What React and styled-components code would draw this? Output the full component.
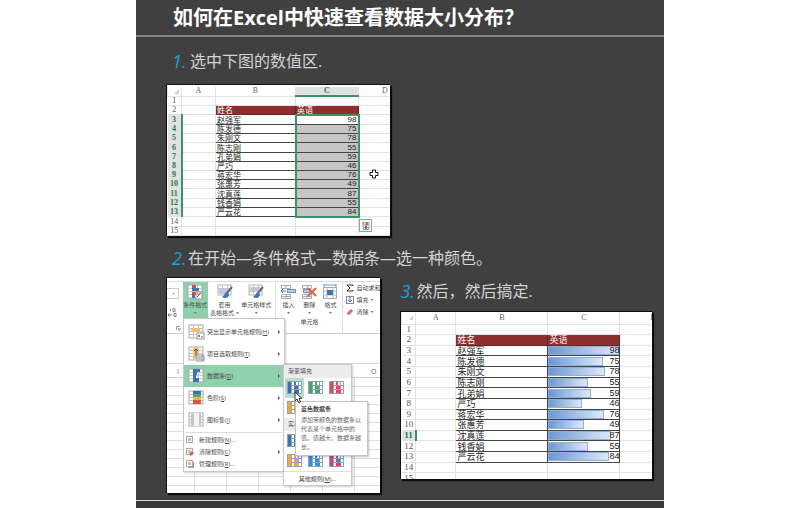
import React from 'react';
import styled, { createGlobalStyle, css } from 'styled-components';

const GlobalStyle = createGlobalStyle`
  * {
    box-sizing: border-box;
  }

  body {
    margin: 0;
    background: #fff;
    font-family: 'Open Sans', 'Noto Sans CJK SC', sans-serif;
  }

  button {
    margin: 0;
    padding: 0;
    border: none;
    background: none;
    color: inherit;
    font: inherit;
    cursor: pointer;
  }
`;

const Slide = styled.main`
  width: 66%;
  min-height: 100vh;
  margin: 0 auto;
  background: #404040;
  display: flex;
  flex-direction: column;
`;

const Header = styled.header`
  height: 37px;
  padding-left: 37px;
  border-bottom: 2px solid #868686;

  h1 {
    margin: 0;
    color: #fff;
    font-size: 20px;
    line-height: 36px;
    font-weight: 700;
    white-space: nowrap;
  }
`;

const Body = styled.div`
  flex: 1;
  padding: 14px 12px 7px 30px;
`;

const Footer = styled.footer`
  height: 8px;
  border-top: 1px solid #d8d8d8;
  background: #3a3a3a;
`;

const Step = styled.h2`
  display: flex;
  margin: 0 0 ${({ $space }) => $space}px;
  padding-left: ${({ $indent }) => $indent || 0}px;
  color: #d4d4d4;
  font-size: 16px;
  line-height: 20px;
  font-weight: 400;
  white-space: nowrap;
`;

const StepNumber = styled.span`
  width: ${({ $wide }) => ($wide ? 18 : 16)}px;
  color: #1ca3d8;
  font-size: 18px;
  font-style: italic;
  font-weight: 400;
`;

const Columns = styled.div`
  display: grid;
  grid-template-columns: minmax(0, 214fr) minmax(0, 251fr);
  gap: 20px;
  align-items: start;
`;

const ResultColumn = styled.div`
  padding-top: 4px;
`;

const Panel = styled.div`
  position: relative;
  width: ${({ $width }) => $width || '100%'};
  height: ${({ $height }) => $height}px;
  padding-top: ${({ $top }) => $top || 0}px;
  margin-bottom: ${({ $space }) => $space || 0}px;
  border: 1px solid #111;
  border-right: none;
  border-bottom: none;
  background: #fff;
  box-shadow: 2px 2px 1px #0c0c0c;
  overflow: hidden;
`;

/* ---------- worksheets ---------- */

const SheetTable = styled.table`
  width: ${({ $width }) => $width};
  height: ${({ $height }) => $height}px;
  table-layout: fixed;
  border-collapse: collapse;
  font-family: 'Noto Sans CJK SC', sans-serif;
  font-size: ${({ $size }) => $size}px;
  line-height: ${({ $size }) => $size}px;
  color: #222;

  th,
  td {
    padding: 0;
    border: 1px solid #e2e2e2;
    white-space: nowrap;
  }

  thead tr {
    height: ${({ $head }) => $head}px;
  }
`;

const ColumnHead = styled.th`
  color: ${({ $active }) => ($active ? '#1f7a4a' : '#666')};
  background: ${({ $active }) => ($active ? '#e1e1e1' : 'transparent')};
  font-family: 'Liberation Serif', serif;
  font-weight: ${({ $active }) => ($active ? 700 : 400)};
  font-size: 8px;
  line-height: 8px;
  && {
    border-top: none;
    ${({ $active }) => $active && css`border-bottom: 2px solid #3c9466;`}
  }
`;

const Corner = styled.i`
  display: block;
  width: 5px;
  height: 5px;
  margin: 0 2px 0 auto;
  background: #d2d2d2;
  clip-path: polygon(100% 0, 100% 100%, 0 100%);
`;

const RowHead = styled.th`
  font-family: 'Liberation Serif', serif;
  font-weight: ${({ $active }) => ($active ? 700 : 400)};
  color: ${({ $active }) => ($active ? '#1f7a4a' : '#555')};
  background: ${({ $active }) => ($active ? '#e1e1e1' : 'transparent')};
  && {
    border-left: none;
    ${({ $active }) => $active && css`border-right: 2px solid #3c9466;`}
  }
`;

const TitleCell = styled.td`
  background: #8f2e2f;
  color: #fff;
  && {
    border: 1px solid #6b2324;
    padding-left: 1px;
  }
`;

const NameCell = styled.td`
  && {
    border: 1px solid #444;
    padding-left: 1px;
  }
`;

const ScoreCell = styled.td`
  font-family: 'Liberation Sans', sans-serif;
  text-align: right;
  background: ${({ $shaded }) => ($shaded ? '#c6c6c6' : '#fff')};
  && {
    border: 1px solid #444;
    padding-right: ${({ $bar }) => ($bar ? 0 : 1)}px;
    ${({ $selected }) => $selected && css`
      border-left: 2px solid #3c9466;
      border-right: 2px solid #3c9466;
    `}
    ${({ $edge }) => $edge === 'top' && css`border-top: 2px solid #3c9466;`}
    ${({ $edge }) => $edge === 'bottom' && css`border-bottom: 2px solid #3c9466;`}
  }
`;

const BarBox = styled.div`
  display: grid;

  > * {
    grid-area: 1 / 1;
  }
`;

const Bar = styled.i`
  height: 9px;
  border: 1px solid #8fb0dc;
  background: linear-gradient(90deg, #6c98d2, #dce8f8);
`;

const QuickButton = styled.button`
  position: absolute;
  left: 192px;
  top: 134px;
  width: 13px;
  height: 13px;
  border: 1px solid #7fae93;
  background: #fff;

  svg {
    display: block;
  }
`;

const CrossCursor = styled.svg`
  position: absolute;
  left: 202px;
  top: 84px;
`;

const scores = [
  ['赵强军', 98],
  ['陈发德', 75],
  ['朱刚文', 78],
  ['陈志刚', 55],
  ['孔弟娟', 59],
  ['严巧', 46],
  ['蒋宏华', 76],
  ['张惠芳', 49],
  ['沈真莲', 87],
  ['钱香娟', 55],
  ['严云花', 84],
];

const maxScore = Math.max(...scores.map(([, score]) => score));

function Sheet({ widths, width, height, head, size, selected, bars, activeRows }) {
  const rows = Array.from({ length: 15 }, (_, i) => i + 1);

  return (
    <SheetTable $width={width} $height={height} $head={head} $size={size}>
      <colgroup>
        {widths.map((w, i) => <col key={i} style={{ width: w }} />)}
        <col />
      </colgroup>
      <thead>
        <tr>
          <ColumnHead><Corner /></ColumnHead>
          <ColumnHead>A</ColumnHead>
          <ColumnHead>B</ColumnHead>
          <ColumnHead $active={selected}>C</ColumnHead>
          <ColumnHead>D</ColumnHead>
        </tr>
      </thead>
      <tbody>
        {rows.map((n) => {
          const entry = scores[n - 3];
          return (
            <tr key={n}>
              <RowHead scope="row" $active={activeRows.includes(n)}>{n}</RowHead>
              <td />
              {n === 2 && (
                <>
                  <TitleCell>姓名</TitleCell>
                  <TitleCell>英语</TitleCell>
                </>
              )}
              {entry && (
                <>
                  <NameCell>{entry[0]}</NameCell>
                  <ScoreCell
                    $bar={bars}
                    $selected={selected}
                    $shaded={selected && n > 3}
                    $edge={selected && (n === 3 ? 'top' : n === 13 ? 'bottom' : '')}
                  >
                    {bars ? (
                      <BarBox>
                        <Bar style={{ width: `${(entry[1] / maxScore) * 100}%` }} />
                        <span>{entry[1]}</span>
                      </BarBox>
                    ) : entry[1]}
                  </ScoreCell>
                </>
              )}
              {n !== 2 && !entry && (
                <>
                  <td />
                  <td />
                </>
              )}
              <td />
            </tr>
          );
        })}
      </tbody>
    </SheetTable>
  );
}

/* ---------- icons ---------- */

function GridBase() {
  return (
    <>
      <rect x="1" y="1" width="14" height="13" fill="#fff" stroke="#a9a9a9" />
      <path d="M1 4.5h14M1 7.5h14M1 10.5h14M5.5 1v13M10.5 1v13" stroke="#c4c4c4" fill="none" />
    </>
  );
}

function ConditionalIcon() {
  return (
    <svg width="16" height="16" viewBox="0 0 16 16">
      <GridBase />
      <path d="M5 1h4v3H5zM5 8h5v3H5z" fill="#d9483b" />
      <path d="M5 4h7v3H5zM5 11h3v3H5z" fill="#3f74b8" />
      <rect x="9" y="8" width="6" height="7" fill="#fff" stroke="#999" />
      <path d="M10 13l4-4M10 10h3" stroke="#c0392b" />
    </svg>
  );
}

function BrushIcon({ table }) {
  return (
    <svg width="16" height="16" viewBox="0 0 16 16">
      <rect x="1" y="1" width="13" height="10" fill="#fff" stroke="#b4b4b4" />
      <rect x="2" y={table ? 4 : 3} width="10" height={table ? 6 : 5} fill="#b7cdea" />
      <path d="M1 4.5h13M1 7.5h13M5.5 1v10M10.5 1v10" stroke="#c4c4c4" />
      <path d="M15 3l-5 6" stroke="#666" strokeWidth="2" />
      <path d="M10 8c-2 0-2 3-5 5 3 2 7 1 7-3z" fill="#3f74b8" />
    </svg>
  );
}

function CellsIcon({ kind }) {
  return (
    <svg width="16" height="16" viewBox="0 0 16 16">
      {kind !== 'format' && (
        <path d="M1.5 1.5h9v3h-9zM1.5 10.5h9v4h-9zM6 1.5v3M6 10.5v4M1.5 12.5h9" fill="#fff" stroke="#aaa" />
      )}
      {kind === 'insert' && (
        <>
          <rect x="7.5" y="5.5" width="8" height="3" fill="#b7cdea" stroke="#6f94c4" />
          <path d="M6 7H1M3 5L1 7l2 2" stroke="#3f74b8" fill="none" />
        </>
      )}
      {kind === 'delete' && (
        <>
          <rect x="2.5" y="5.5" width="6" height="3" fill="#b7cdea" stroke="#6f94c4" />
          <path d="M7 4l8 8M15 4l-8 8" stroke="#e0603c" strokeWidth="2" />
        </>
      )}
      {kind === 'format' && (
        <>
          <rect x="1.5" y="3.5" width="13" height="11" fill="#fff" stroke="#aaa" />
          <path d="M1 7h14M1 11h14M5 3v12M11 3v12" stroke="#bbb" />
          <rect x="5" y="6" width="6" height="5" fill="#3f74b8" />
          <path d="M2 1h12M2 0v3M14 0v3" stroke="#6f94c4" />
        </>
      )}
    </svg>
  );
}

function MenuIcon({ kind }) {
  return (
    <svg width="17" height="17" viewBox="0 0 17 17">
      <GridBase />
      {kind === 'highlight' && (
        <>
          <rect x="3" y="4" width="9" height="4" fill="#f3bd69" />
          <rect x="9" y="9" width="7" height="6" fill="#fff" stroke="#999" />
          <path d="M10 12l2-1M10 12l2 1M13 13h2" stroke="#666" />
        </>
      )}
      {kind === 'top' && (
        <>
          <rect x="5" y="1" width="6" height="12" fill="#eac07b" />
          <path d="M8 10V3M6 5l2-2 2 2" stroke="#555" fill="none" />
          <rect x="9" y="9" width="7" height="6" fill="#fff" stroke="#999" />
          <path d="M11 10v4M13 10h2v4h-2z" stroke="#888" fill="none" />
        </>
      )}
      {kind === 'bars' && <path d="M5 1h7v3H5zM5 4h4v3H5zM5 7h3v3H5zM5 10h6v4H5z" fill="#3973b9" />}
      {kind === 'scale' && (
        <>
          <path d="M5 1h8v3H5z" fill="#3973b9" />
          <path d="M5 4h8v3H5z" fill="#51a67b" />
          <path d="M5 7h8v3H5z" fill="#f0b44e" />
          <path d="M5 10h8v4H5z" fill="#d9583c" />
        </>
      )}
      {kind === 'set' && (
        <>
          <rect x="6" y="1" width="5" height="13" fill="#f4f4f4" />
          <path d="M4 2v11M12 2v11" stroke="#888" strokeDasharray="2 1" />
        </>
      )}
    </svg>
  );
}

function RuleIcon({ kind }) {
  return (
    <svg width="8" height="8" viewBox="0 0 8 8">
      <rect x=".5" y=".5" width="6" height="6" fill="#fff" stroke="#aaa" />
      <rect x="2" y="2" width="3" height="3" fill="#e9b691" />
      {kind === 'clear' && <path d="M3 6l3-3 2 2-3 3z" fill="#d65a70" />}
      {kind === 'manage' && <path d="M2 7.5h5.5V2" fill="none" stroke="#999" />}
    </svg>
  );
}

function SwatchIcon({ color }) {
  return (
    <svg width="16" height="14" viewBox="0 0 16 14">
      <rect x=".5" y=".5" width="14" height="12" fill="#fff" stroke="#8fa3b8" />
      <path d="M0 4.5h15M0 8.5h15M4.5 0v13M11.5 0v13" stroke="#8fa3b8" />
      <path d="M1 1h3v11H1zM7 1h2v3H7zM7 5h4v3H7zM7 9h5v3H7z" fill={color} />
    </svg>
  );
}

/* ---------- Excel window ---------- */

const Window = styled.div`
  height: 100%;
  display: flex;
  flex-direction: column;
  color: #4a4a4a;
  font-size: 6px;
  line-height: 8px;
  white-space: nowrap;
`;

const Ribbon = styled.div`
  display: flex;
  height: 53px;
  margin-top: 3px;
  border-top: 1px solid #ddd;
  border-bottom: 1px solid #cfcfcf;
`;

const NumberGroup = styled.div`
  width: 16px;
  display: flex;
  flex-direction: column;
  gap: 9px;
  padding-top: 6px;
  text-align: center;
  color: #666;
`;

const FormatBox = styled.button`
  width: 12px;
  height: 11px;
  border: 1px solid #ccc;
  border-left: none;
`;

const Tool = styled.button`
  width: ${({ $width }) => $width}px;
  height: 36px;
  padding-top: 2px;
  display: flex;
  flex-direction: column;
  align-items: center;
  background: ${({ $active }) => ($active ? '#8fd0ad' : 'none')};

  svg {
    flex: none;
    margin-bottom: 1px;
  }
`;

const Group = styled.div`
  display: flex;
  flex-direction: column;
  align-items: center;
  padding: 0 2px;
  border-right: 1px solid #ddd;
`;

const GroupTools = styled.div`
  display: flex;
`;

const EditGroup = styled.div`
  display: flex;
  flex-direction: column;
  gap: 4px;
  padding: 2px 0 0 3px;
`;

const EditTool = styled.button`
  display: flex;
  gap: 2px;
  align-items: center;
  height: 8px;

  svg {
    flex: none;
  }
`;

const Caret = styled.i`
  display: inline-block;
  flex: none;
  width: 3px;
  height: 2px;
  margin: ${({ $inline }) => ($inline ? '0 0 1px 2px' : '3px 0 0')};
  background: #777;
  clip-path: polygon(0 0, 100% 0, 50% 100%);
`;

const FormulaBar = styled.div`
  height: 30px;
  border-bottom: 1px solid #d6d6d6;
`;

const Letters = styled.div`
  display: flex;
  justify-content: space-between;
  height: 14px;
  padding: 4px 4px 0 10px;
  border-bottom: 1px solid #cfcfcf;
  color: #666;
  font-size: 7px;
`;

const Cells = styled.div`
  flex: 1;
  background:
    repeating-linear-gradient(90deg, transparent 0 31px, #dedede 31px 32px) -4px 0,
    repeating-linear-gradient(#fff 0 8px, #dedede 8px 9px);
`;

const Menu = styled.div`
  position: absolute;
  left: 16px;
  top: 40px;
  width: 102px;
  padding: 2px 0 1px;
  border: 1px solid #c8c8c8;
  background: #fff;
  box-shadow: 1px 1px 2px rgba(0, 0, 0, 0.2);
`;

const MenuItem = styled.button`
  width: 100%;
  height: ${({ $small }) => ($small ? 12 : 22)}px;
  padding: 0 4px 0 ${({ $small }) => ($small ? 2 : 4)}px;
  display: flex;
  align-items: center;
  gap: ${({ $small }) => ($small ? 5 : 2)}px;
  background: ${({ $active }) => ($active ? '#8fd0ad' : 'none')};

  svg {
    flex: none;
  }

  span {
    flex: 1;
    text-align: left;
  }
`;

const Chevron = styled.i`
  width: 2px;
  height: 4px;
  background: #555;
  clip-path: polygon(0 0, 100% 50%, 0 100%);
`;

const Divider = styled.div`
  height: 1px;
  margin: 1px 2px;
  background: #ddd;
`;

const Submenu = styled.div`
  position: absolute;
  left: 116px;
  top: 86px;
  width: 69px;
  border: 1px solid #c8c8c8;
  background: #fff;
  box-shadow: 1px 1px 2px rgba(0, 0, 0, 0.2);
`;

const SubTitle = styled.div`
  height: 13px;
  padding-left: 4px;
  background: #ececec;
  line-height: 13px;
`;

const Swatches = styled.div`
  display: grid;
  grid-template-columns: repeat(3, 19px);
  column-gap: 2px;
  padding: 0 1px;
`;

const Swatch = styled.button`
  display: grid;
  place-items: center;
  height: 20px;
  background: ${({ $active }) => ($active ? '#b4dfc8' : 'none')};
`;

const MoreRules = styled.button`
  width: 100%;
  height: 14px;
  border-top: 1px solid #ddd;
`;

const Tooltip = styled.div`
  position: absolute;
  left: 128px;
  top: 123px;
  width: 73px;
  padding: 3px 5px;
  border: 1px solid #c4c4c4;
  background: #fff;
  box-shadow: 1px 1px 2px rgba(0, 0, 0, 0.25);
  color: #666;
  line-height: 9px;
  white-space: normal;

  strong {
    display: block;
    margin-bottom: 2px;
    color: #444;
  }

  p {
    margin: 0;
  }
`;

const ArrowCursor = styled.svg`
  position: absolute;
  left: 127px;
  top: 113px;
`;

const menuItems = [
  { kind: 'highlight', label: '突出显示单元格规则', accel: 'H' },
  { kind: 'top', label: '项目选取规则', accel: 'T' },
  { kind: 'bars', label: '数据条', accel: 'D' },
  { kind: 'scale', label: '色阶', accel: 'S' },
  { kind: 'set', label: '图标集', accel: 'I' },
];

const ruleItems = [
  { kind: 'new', label: '新建规则', accel: 'N', dots: true },
  { kind: 'clear', label: '清除规则', accel: 'C', more: true },
  { kind: 'manage', label: '管理规则', accel: 'R', dots: true },
];

const swatchRows = [
  ['#3f6fb5', '#4aa564', '#e0485a'],
  ['#f0a92c', '#2f8fdc', '#d63c86'],
];

function SwatchGrid({ highlight }) {
  return (
    <Swatches>
      {swatchRows.flat().map((color, i) => (
        <Swatch key={color} $active={highlight && i === 0} aria-label={`数据条 ${i + 1}`}>
          <SwatchIcon color={color} />
        </Swatch>
      ))}
    </Swatches>
  );
}

function ExcelWindow() {
  return (
    <Window>
      <Ribbon>
        <NumberGroup>
          <FormatBox aria-label="数字格式"><Caret $inline /></FormatBox>
          <svg width="10" height="9" viewBox="0 0 10 9">
            <path d="M3.5 1v2M6 .5h2v3H6zM7 5.5h2v3H7z" fill="none" stroke="#888" />
            <path d="M5 7H1M2.5 5.5L1 7l1.5 1.5" fill="none" stroke="#3f74b8" />
          </svg>
          <svg width="14" height="5" viewBox="0 0 14 5">
            <path d="M9.5 4V.5H13M11 2l2 2M13 2v2h-2" fill="none" stroke="#999" />
          </svg>
        </NumberGroup>
        <Tool $width={26} $active>
          <ConditionalIcon />
          <span>条件格式</span>
          <Caret />
        </Tool>
        <Tool $width={34}>
          <BrushIcon table />
          <span>套用</span>
          <span>表格格式<Caret $inline /></span>
        </Tool>
        <Tool $width={31}>
          <BrushIcon />
          <span>单元格样式</span>
          <Caret />
        </Tool>
        <Group />
        <Group>
          <GroupTools>
            <Tool $width={20}>
              <CellsIcon kind="insert" />
              <span>插入</span>
              <Caret />
            </Tool>
            <Tool $width={22}>
              <CellsIcon kind="delete" />
              <span>删除</span>
              <Caret />
            </Tool>
            <Tool $width={20}>
              <CellsIcon kind="format" />
              <span>格式</span>
              <Caret />
            </Tool>
          </GroupTools>
          <span>单元格</span>
        </Group>
        <EditGroup>
          <EditTool>
            <svg width="8" height="8" viewBox="0 0 8 8">
              <path d="M7 2V1H1l3 3-3 3h6V6" fill="none" stroke="#333" />
            </svg>
            自动求和
          </EditTool>
          <EditTool>
            <svg width="8" height="8" viewBox="0 0 8 8">
              <rect x=".5" y=".5" width="7" height="7" fill="#fff" stroke="#888" />
              <path d="M4 1v5M2 4l2 2 2-2" fill="none" stroke="#2f6fb8" />
            </svg>
            <span>填充<Caret $inline /></span>
          </EditTool>
          <EditTool>
            <svg width="8" height="8" viewBox="0 0 8 8">
              <path d="M1 5l4-4 2 2-4 4H2z" fill="#dc5b7c" />
            </svg>
            <span>清除<Caret $inline /></span>
          </EditTool>
        </EditGroup>
      </Ribbon>
      <FormulaBar />
      <Letters>
        <span>I</span>
        <span>O</span>
      </Letters>
      <Cells />

      <Menu>
        {menuItems.map((item) => (
          <MenuItem key={item.kind} $active={item.kind === 'bars'}>
            <MenuIcon kind={item.kind} />
            <span>{item.label}(<u>{item.accel}</u>)</span>
            <Chevron />
          </MenuItem>
        ))}
        <Divider />
        {ruleItems.map((item) => (
          <MenuItem key={item.kind} $small>
            <RuleIcon kind={item.kind} />
            <span>{item.label}(<u>{item.accel}</u>){item.dots && '...'}</span>
            {item.more && <Chevron />}
          </MenuItem>
        ))}
      </Menu>

      <Submenu>
        <SubTitle>渐变填充</SubTitle>
        <SwatchGrid highlight />
        <SubTitle>实心填充</SubTitle>
        <SwatchGrid />
        <MoreRules>其他规则(<u>M</u>)...</MoreRules>
      </Submenu>

      <Tooltip role="tooltip">
        <strong>蓝色数据条</strong>
        <p>添加带颜色的数据条以代表某个单元格中的值。值越大，数据条越长。</p>
      </Tooltip>
      <ArrowCursor width="9" height="13" viewBox="0 0 9 13">
        <path d="M1 1v9l2-2 2 4 1.500-1L5 7.500h3z" fill="#fff" stroke="#333" />
      </ArrowCursor>
    </Window>
  );
}

function App() {
  return (
    <>
      <GlobalStyle />
      <Slide>
        <Header>
          <h1>如何在Excel中快速查看数据大小分布？</h1>
        </Header>
        <Body>
          <Step $indent={6} $space={13}>
            <StepNumber $wide>1.</StepNumber>
            选中下图的数值区.
          </Step>
          <Panel $width="46%" $height={152} $top={2} $space={12}>
            <Sheet
              widths={[14, 34, 80, 63]}
              width="110%"
              height={149}
              head={9}
              size={8}
              selected
              activeRows={[3, 4, 5, 6, 7, 8, 9, 10, 11, 12, 13]}
            />
            <CrossCursor width="10" height="10" viewBox="0 0 10 10">
              <path d="M3.5 1h3v2.500H9v3H6.500V9h-3V6.500H1v-3h2.500z" fill="#fff" stroke="#111" />
            </CrossCursor>
            <QuickButton aria-label="快速分析">
              <svg width="11" height="11" viewBox="0 0 11 11">
                <path d="M3 2.500h6v7H3zM3 5h6M3 7.500h6M6 2.500v7" fill="none" stroke="#999" />
                <path d="M6 3h2v2H6z" fill="#d9583c" />
                <path d="M5 6h2v3H5z" fill="#3973b9" />
                <path d="M2 1l2 2-2 2z" fill="#e0a040" />
              </svg>
            </QuickButton>
          </Panel>

          <Step $indent={6} $space={9}>
            <StepNumber>2.</StepNumber>
            在开始—条件格式—数据条—选一种颜色。
          </Step>
          <Columns>
            <Panel $height={216}>
              <ExcelWindow />
            </Panel>
            <ResultColumn>
              <Step $space={10}>
                <StepNumber>3.</StepNumber>
                然后，然后搞定.
              </Step>
              <Panel $height={168}>
                <Sheet
                  widths={[14, 40, 92, 72]}
                  width="114%"
                  height={172}
                  head={12}
                  size={9}
                  bars
                  activeRows={[11]}
                />
              </Panel>
            </ResultColumn>
          </Columns>
        </Body>
        <Footer />
      </Slide>
    </>
  );
}

export default App;
